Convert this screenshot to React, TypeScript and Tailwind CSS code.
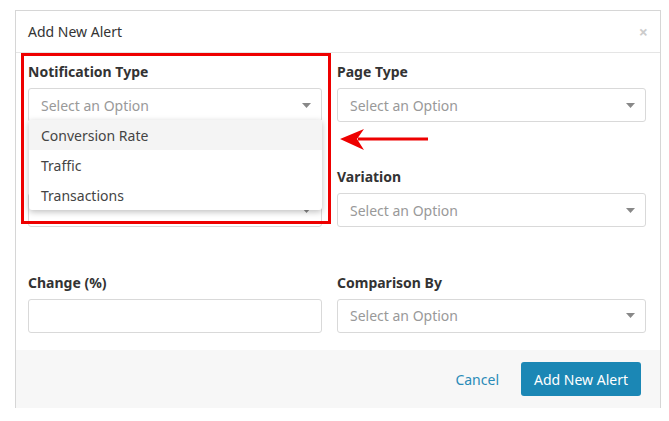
const Caret = () => (
  <svg className="w-[9px] h-[5px]" viewBox="0 0 9 5">
    <path d="M0 0h9L4.5 5z" fill="#888" />
  </svg>
);

function Select({ className = '', hidden = false }: { className?: string; hidden?: boolean }) {
  return (
    <div className={`h-[34px] border border-[#d9d9d9] rounded-[3px] bg-white flex items-center justify-between pl-3 pr-[10px] text-[14px] text-[#999] ${className}`}>
      <span className={hidden ? 'invisible' : ''}>Select an Option</span>
      <Caret />
    </div>
  );
}

function Field({ label, hidden = false, children }: { label: string; hidden?: boolean; children: React.ReactNode }) {
  return (
    <div className="flex flex-col">
      <label className={`text-[14px] font-bold text-[#333] mb-[8px] leading-[16px] ${hidden ? 'invisible' : ''}`}>{label}</label>
      {children}
    </div>
  );
}

export default function App() {
  return (
    <div className="w-[669px] h-[421px] bg-white font-['Liberation_Sans',Arial,sans-serif] pt-[10px] pl-[15px] pr-[8px]">
      <div className="relative border-t border-x border-[#d6d6d6] bg-white">
        {/* Header */}
        <div className="h-[42px] flex items-center justify-between px-[12px] border-b border-[#e5e5e5]">
          <span className="text-[14px] text-[#333]">Add New Alert</span>
          <span className="text-[16px] text-[#ccc] font-bold leading-none">×</span>
        </div>

        {/* Body */}
        <div className="grid grid-cols-[294px_309px] gap-x-[15px] gap-y-[30px] pl-[12px] pt-[11px] h-[297px]">
          <Field label="Notification Type"><Select /></Field>
          <Field label="Page Type"><Select /></Field>
          <Field label="Metric" hidden><Select hidden /></Field>
          <Field label="Variation"><Select /></Field>
          <Field label="Change (%)">
            <div className="h-[34px] border border-[#d9d9d9] rounded-[3px] bg-white" />
          </Field>
          <Field label="Comparison By"><Select /></Field>
        </div>

        {/* Footer */}
        <div className="h-[58px] bg-[#f7f7f7] flex items-center justify-end gap-[22px] pr-[19px]">
          <span className="text-[14px] text-[#2a8bb8]">Cancel</span>
          <button className="h-[34px] px-[13px] rounded-[3px] bg-[#1b87b5] text-white text-[14px]">Add New Alert</button>
        </div>

        {/* Dropdown open */}
        <div className="absolute left-[13px] top-[109px] w-[293px] bg-white rounded-b-[3px] shadow-[0_2px_6px_rgba(0,0,0,0.25)] text-[14px] text-[#444]">
          <div className="h-[30px] flex items-center px-[12px] bg-[#f4f4f4]">Conversion Rate</div>
          <div className="h-[30px] flex items-center px-[12px]">Traffic</div>
          <div className="h-[30px] flex items-center px-[12px]">Transactions</div>
        </div>

        {/* Highlight box */}
        <div className="absolute left-[5px] top-[42px] w-[310px] h-[171px] border-[3px] border-[#ee0000]" />

        {/* Arrow */}
        <svg className="absolute left-[322px] top-[115px]" width="92" height="28" viewBox="0 0 92 28">
          <path d="M90 13H20" stroke="#ee0000" strokeWidth="3" />
          <path d="M2 13L26 3L19 13L26 24Z" fill="#ee0000" />
        </svg>
      </div>
    </div>
  );
}
